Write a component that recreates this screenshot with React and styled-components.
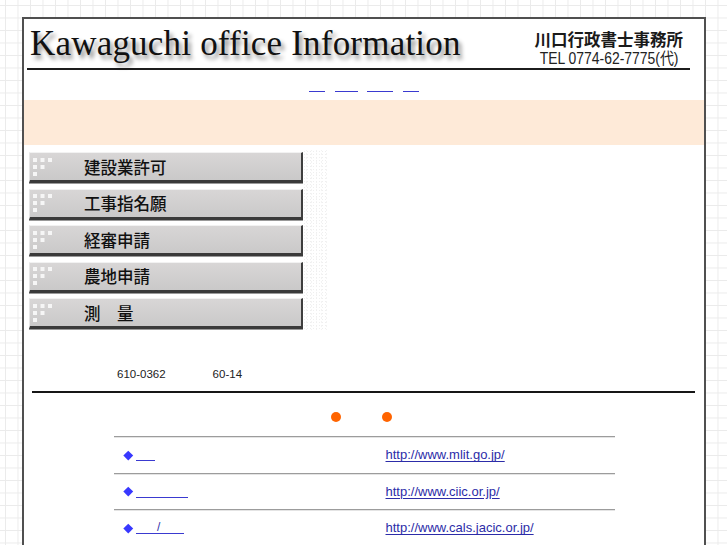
import React from "react";
import styled, { createGlobalStyle } from "styled-components";

const Global = createGlobalStyle`
  html, body { margin: 0; padding: 0; }
  body {
    background-color: #fff;
    background-image:
      linear-gradient(to right, #ebebeb 1px, transparent 1px),
      linear-gradient(to bottom, #ebebeb 1px, transparent 1px);
    background-size: 12.5px 12.5px;
    background-position: 5px 5px;
    font-family: "Liberation Sans", Arial, sans-serif;
    height: 545px;
    overflow: hidden;
  }
`;

const Page = styled.div`
  padding: 17px 0 0 22px;
`;

const Frame = styled.div`
  width: 684px;
  box-sizing: border-box;
  min-height: 540px;
  border: 2px solid #505050;
  border-bottom: none;
  background: #fff;
`;

const Header = styled.header`
  display: flex;
  justify-content: space-between;
  align-items: flex-start;
  height: 49px;
  margin: 0 14px 0 3px;
  padding: 0 7px 0 3px;
  border-bottom: 2px solid #1c1c1c;
`;

const Title = styled.h1`
  margin: 6.5px 0 0;
  font-family: "Liberation Serif", "Times New Roman", serif;
  font-weight: normal;
  font-size: 35px;
  line-height: 35px;
  color: #111;
  letter-spacing: 0.2px;
  text-shadow: 3px 4px 4px rgba(0, 0, 0, 0.45);
`;

const Office = styled.div`
  display: flex;
  flex-direction: column;
  align-items: flex-end;
  margin-top: 11px;
`;

const OfficeName = styled.div`
  font-family: "Noto Sans CJK JP", sans-serif;
  font-weight: 700;
  font-size: 16.5px;
  line-height: 18px;
  color: #1a1a1a;
`;

const Tel = styled.div`
  margin-top: 3px;
  font-family: "Liberation Sans", "Noto Sans CJK JP", sans-serif;
  font-size: 16px;
  line-height: 15px;
  color: #222;
  transform: scaleX(0.87);
  transform-origin: right center;
  margin-right: 5px;
  white-space: nowrap;
`;

const Nav = styled.nav`
  display: flex;
  justify-content: center;
  align-items: flex-end;
  gap: 9.5px;
  height: 30px;
  box-sizing: border-box;
  padding-bottom: 8px;
`;

const BlankLink = styled.a`
  display: inline-block;
  width: ${(p) => p.$w}px;
  height: 13px;
  border-bottom: 1px solid #3a3ad0;
  font-size: 12px;
  line-height: 13px;
  color: #3333aa;
  text-decoration: none;
  box-sizing: border-box;
  padding-left: ${(p) => p.$pad || 0}px;
  vertical-align: middle;
`;

const Band = styled.div`
  height: 45px;
  background: #feead8;
`;

const MenuArea = styled.div`
  display: flex;
  align-items: flex-start;
  padding: 5px 0 0 5px;
`;

const MenuList = styled.div`
  display: flex;
  flex-direction: column;
  gap: 5.5px;
  padding-top: 2px;
  width: 274px;
`;

const Stipple = styled.div`
  width: 25px;
  height: 180px;
  background-image:
    radial-gradient(circle, #efefef 0.6px, transparent 0.7px),
    radial-gradient(circle, #f3f3f3 0.6px, transparent 0.7px);
  background-size: 3px 3px, 5px 4px;
  background-position: 0 0, 1px 2px;
`;

const MenuButton = styled.a`
  display: flex;
  align-items: center;
  height: 31px;
  box-sizing: border-box;
  padding-left: 3px;
  background: linear-gradient(#d8d6d6, #cac9c9);
  border-top: 1px solid #f2f2f2;
  border-left: 1px solid #e6e6e6;
  border-right: 2px solid #3e3e3e;
  border-bottom: 3px solid #3a3a3a;
  box-shadow: 0 1px 0 #9a9a9a;
  text-decoration: none;
  color: #111;
  cursor: pointer;
`;

const MenuLabel = styled.span`
  margin-left: 32px;
  font-family: "Noto Sans CJK JP", sans-serif;
  font-weight: 500;
  font-size: 16.5px;
  line-height: 20px;
  color: #111;
  white-space: pre;
`;

const Squares = () => (
  <svg width="19" height="18" viewBox="0 0 19 18">
    <g fill="#f6f6f6">
      <rect x="0" y="0" width="4" height="4" />
      <rect x="7.5" y="0" width="4" height="4" />
      <rect x="15" y="0" width="4" height="4" />
      <rect x="0" y="7" width="4" height="4" />
      <rect x="7.5" y="7" width="4" height="4" />
      <rect x="0" y="14" width="4" height="4" />
    </g>
  </svg>
);

const Address = styled.div`
  display: flex;
  gap: 47px;
  padding: 37px 0 0 93px;
  height: 61px;
  box-sizing: border-box;
  font-size: 11.5px;
  line-height: 14px;
  color: #222;
`;

const Rule = styled.hr`
  margin: 0 9px 0 8px;
  border: none;
  border-top: 2px solid #161616;
  height: 0;
`;

const Dots = styled.div`
  display: flex;
  justify-content: center;
  gap: 41px;
  padding: 19px 5px 0 0;
  height: 43px;
  box-sizing: border-box;
`;

const Dot = styled.span`
  width: 10px;
  height: 10px;
  border-radius: 50%;
  background: #ff6400;
`;

const LinkTable = styled.div`
  width: 501px;
  margin: 0 auto;
`;

const LinkRow = styled.div`
  display: grid;
  grid-template-columns: 272px 1fr;
  align-items: center;
  height: 36.5px;
  box-sizing: border-box;
  border-top: 1px solid #9c9c9c;
  box-shadow: inset 0 1px 0 #e4e4e4;
`;

const RowName = styled.div`
  display: flex;
  align-items: center;
  padding-left: 11px;
  gap: 4px;
`;

const Diamond = styled.span`
  width: 6.5px;
  height: 6.5px;
  background: #3838ff;
  transform: rotate(45deg);
  margin-right: 1px;
`;

const Url = styled.a`
  font-size: 13px;
  color: #2c2ca8;
  text-decoration: underline;
  text-underline-offset: 2px;
`;

const menu = ["建設業許可", "工事指名願", "経審申請", "農地申請", "測　量"];

const links = [
  { w: 19, url: "http://www.mlit.go.jp/" },
  { w: 52, url: "http://www.ciic.or.jp/" },
  { w: 48, url: "http://www.cals.jacic.or.jp/", slash: true },
];

export default function App() {
  return (
    <>
      <Global />
      <Page>
        <Frame>
          <Header>
            <Title>Kawaguchi office Information</Title>
            <Office>
              <OfficeName>川口行政書士事務所</OfficeName>
              <Tel>TEL 0774-62-7775(代)</Tel>
            </Office>
          </Header>
          <Nav>
            <BlankLink $w={16} href="#" />
            <BlankLink $w={23} href="#" />
            <BlankLink $w={26} href="#" />
            <BlankLink $w={16} href="#" />
          </Nav>
          <Band />
          <MenuArea>
            <MenuList>
              {menu.map((m) => (
                <MenuButton key={m} href="#">
                  <Squares />
                  <MenuLabel>{m}</MenuLabel>
                </MenuButton>
              ))}
            </MenuList>
            <Stipple />
          </MenuArea>
          <Address>
            <span>610-0362</span>
            <span>60-14</span>
          </Address>
          <Rule />
          <Dots>
            <Dot />
            <Dot />
          </Dots>
          <LinkTable>
            {links.map((l) => (
              <LinkRow key={l.url}>
                <RowName>
                  <Diamond />
                  <BlankLink $w={l.w} $pad={l.slash ? 21 : 0} href="#">
                    {l.slash ? "/" : ""}
                  </BlankLink>
                </RowName>
                <Url href="#">{l.url}</Url>
              </LinkRow>
            ))}
          </LinkTable>
        </Frame>
      </Page>
    </>
  );
}
